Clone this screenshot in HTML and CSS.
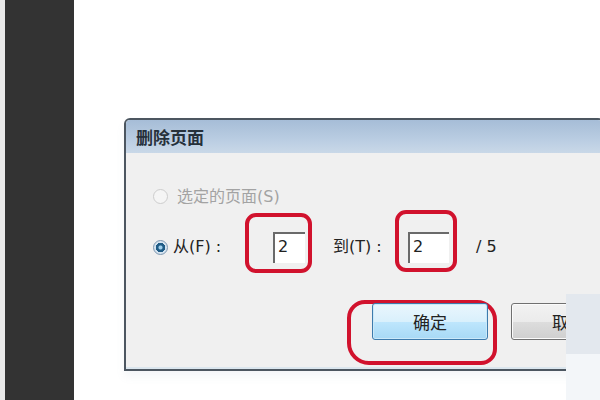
FILE: index.html
```html
<!DOCTYPE html>
<html lang="zh-CN">
<head>
<meta charset="utf-8">
<title>删除页面</title>
<link rel="stylesheet" href="styles.css">
</head>
<body>
<div class="page">
  <div class="gutter"></div>
  <div class="sidebar"></div>
  <main class="main">
    <section class="dialog">
      <header class="titlebar">删除页面</header>
      <div class="dialog-body">
        <div class="row row-first">
          <span class="radio radio-disabled"></span>
          <span class="label label-disabled">选定的页面(S)</span>
        </div>
        <div class="row row-range">
          <span class="radio radio-checked"></span>
          <span class="label label-from">从(F) :</span>
          <span class="mark mark-from"><span class="field">2</span></span>
          <span class="label label-to">到(T) :</span>
          <span class="mark mark-to"><span class="field field-wide">2</span></span>
          <span class="label label-total">/ 5</span>
        </div>
        <div class="row row-buttons">
          <span class="mark mark-ok"><button class="btn btn-default">确定</button></span>
          <button class="btn btn-cancel">取消</button>
        </div>
      </div>
    </section>
    <div class="overlay">
      <div class="overlay-top"></div>
      <div class="overlay-bottom"></div>
    </div>
  </main>
</div>
</body>
</html>
```

FILE: styles.css
```css
html, body {
  margin: 0;
  padding: 0;
  background: #ffffff;
}

.page {
  width: 600px;
  height: 400px;
  display: flex;
  overflow: hidden;
  font-family: "DejaVu Sans", "Noto Sans CJK SC", sans-serif;
  background: #ffffff;
}

.gutter {
  width: 5px;
  flex: none;
  background: #e9e9e9;
}

.sidebar {
  width: 69px;
  flex: none;
  background: #333333;
}

.main {
  position: relative;
  flex: 1;
  padding: 118px 0 0 50px;
  background: #ffffff;
}

.dialog {
  width: 480px;
  height: 253px;
  box-sizing: border-box;
  border: 2px solid #4c5660;
  border-radius: 6px 6px 0 0;
  display: flex;
  flex-direction: column;
  overflow: hidden;
  box-shadow: 0 6px 8px rgba(120, 140, 160, 0.08);
}

.titlebar {
  height: 33px;
  flex: none;
  display: flex;
  align-items: center;
  padding-left: 10px;
  font-family: "Noto Sans CJK SC", sans-serif;
  font-size: 17px;
  font-weight: bold;
  color: #26303b;
  background: linear-gradient(#a6bdd7, #bacde2 60%, #c9d8e8);
}

.dialog-body {
  flex: 1;
  background: #f0f0f0;
  padding: 30px 0 0 27px;
  border-bottom: 2px solid #dbe6ee;
}

.row {
  display: flex;
}

.row-first {
  height: 27px;
  align-items: center;
}

.row-range {
  height: 63px;
  align-items: flex-start;
}

.row-buttons {
  margin: 27px 0 0 194px;
  align-items: flex-start;
}

.radio {
  width: 15px;
  height: 15px;
  box-sizing: border-box;
  border-radius: 50%;
  flex: none;
}

.radio-disabled {
  border: 1px solid #cdcdcd;
  background: #f5f5f5;
}

.radio-checked {
  margin-top: 30px;
  border: 1px solid #7d97b0;
  background: radial-gradient(circle, #9fd0ee 0 1.5px, #1f5c86 2.5px 4.5px, #d5e3ef 5px);
}

.label {
  font-size: 16px;
  line-height: 24px;
  color: #222222;
  white-space: nowrap;
}

.label-disabled {
  margin-left: 9px;
  color: #a3a3a3;
}

.label-from {
  margin: 25px 0 0 5px;
  width: 72px;
}

.label-to {
  margin: 25px 0 0 21px;
  width: 62px;
}

.label-total {
  margin: 25px 0 0 19px;
}

.mark {
  display: flex;
  align-items: flex-start;
  border: 4px solid #d1122d;
  flex: none;
}

.mark-from {
  margin-top: 3px;
  width: 67px;
  height: 60px;
  border-radius: 11px;
  box-sizing: border-box;
  padding: 15px 0 0 24px;
}

.mark-to {
  width: 62px;
  height: 62px;
  border-radius: 11px;
  box-sizing: border-box;
  padding: 18px 0 0 9px;
}

.field {
  width: 32px;
  height: 31px;
  box-sizing: border-box;
  background: #ffffff;
  border-top: 2px solid #6a6a6a;
  border-left: 2px solid #6a6a6a;
  padding-left: 3px;
  font-size: 16px;
  line-height: 26px;
  color: #222222;
}

.field-wide {
  width: 41px;
}

.mark-ok {
  width: 150px;
  height: 65px;
  box-sizing: border-box;
  border-radius: 18px 20px 16px 22px;
  padding: 0 0 0 21px;
}

.btn {
  width: 116px;
  height: 37px;
  box-sizing: border-box;
  border-radius: 3px;
  font-family: "Noto Sans CJK SC", sans-serif;
  font-size: 17px;
  color: #222222;
  padding: 0;
  flex: none;
}

.btn-default {
  margin-top: -1px;
  border: 1px solid #3d7bad;
  background: linear-gradient(#eaf6fd, #d9f0fc 50%, #bee6fd 51%, #a7d9f5);
  box-shadow: inset 0 0 0 1px #cbe9f9;
}

.btn-cancel {
  margin: 3px 0 0 14px;
  border: 1px solid #707070;
  background: linear-gradient(#f2f2f2, #ebebeb 50%, #dddddd 51%, #cfcfcf);
  box-shadow: inset 0 0 0 1px #fbfbfb;
}

.overlay {
  position: absolute;
  left: 492px;
  top: 294px;
  width: 40px;
  height: 106px;
  display: flex;
  flex-direction: column;
}

.overlay-top {
  height: 60px;
  background: #e3e8ee;
}

.overlay-bottom {
  flex: 1;
  background: #f3f6f9;
}
```
